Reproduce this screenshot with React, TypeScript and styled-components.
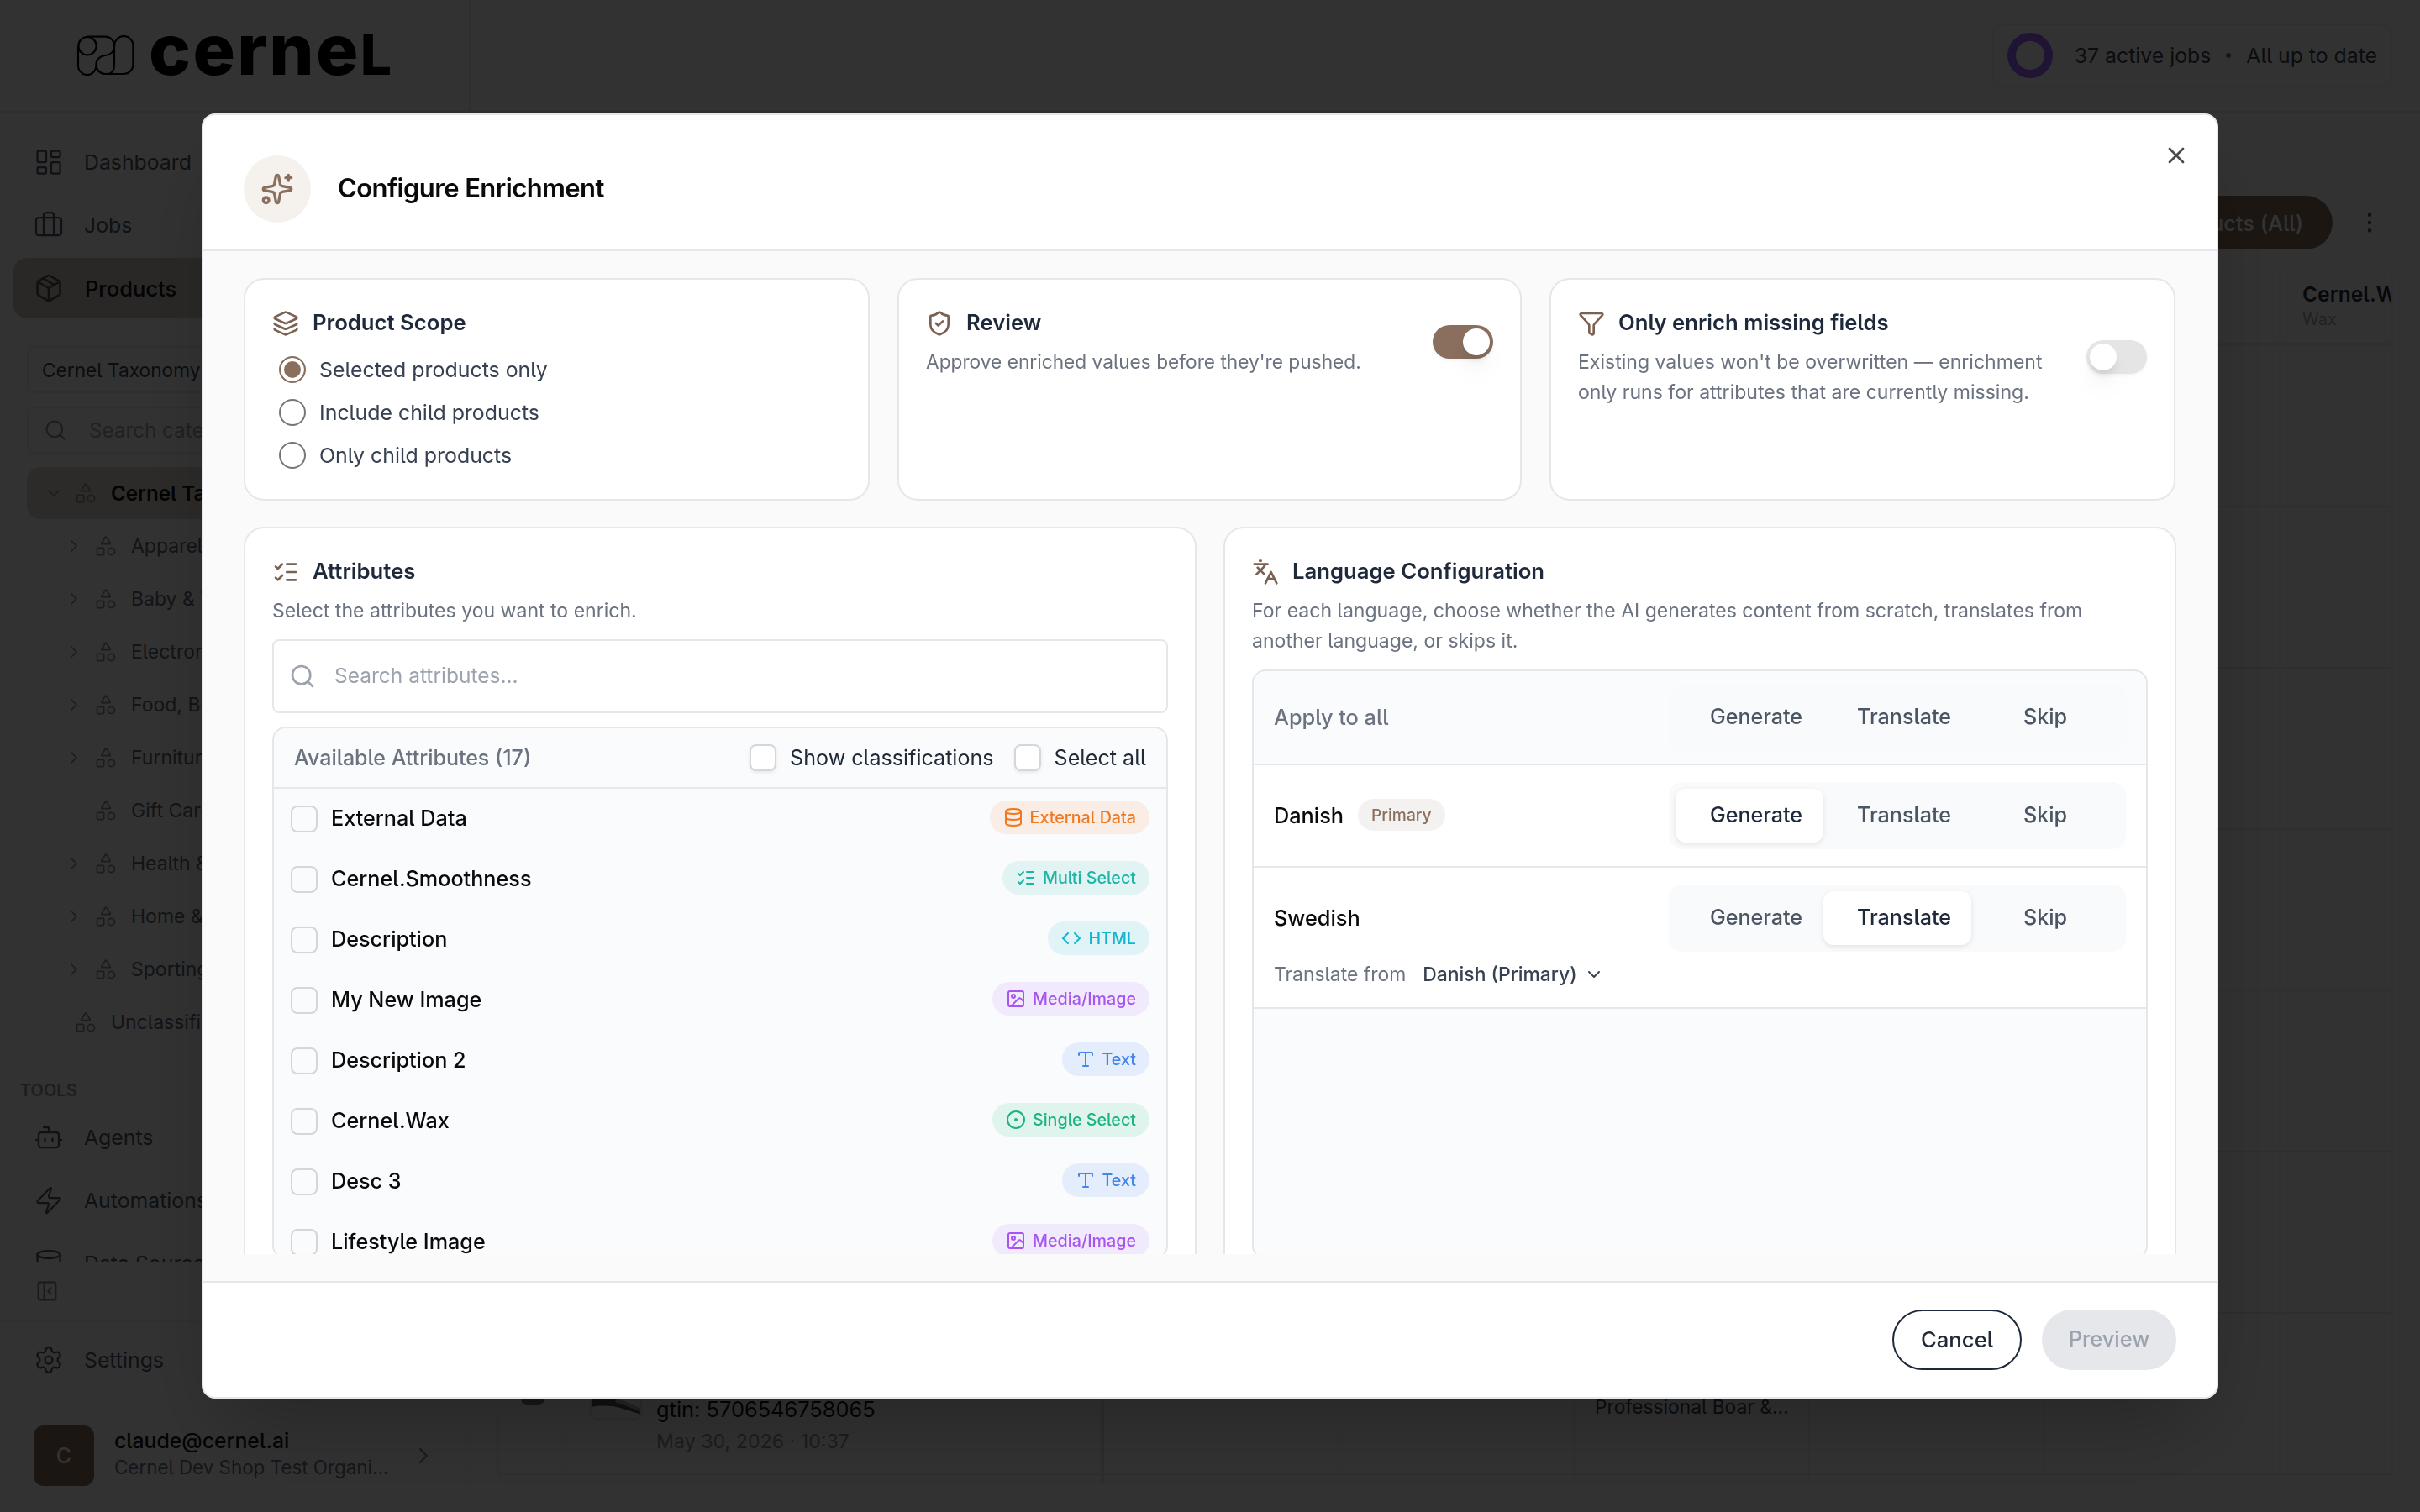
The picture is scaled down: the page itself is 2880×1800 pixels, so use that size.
import styled, { createGlobalStyle, css } from 'styled-components';
import {
  Bot,
  Briefcase,
  Check,
  ChevronDown,
  ChevronRight,
  CircleDot,
  Code,
  Database,
  EllipsisVertical,
  Funnel,
  Image,
  Languages,
  Layers,
  LayoutDashboard,
  ListChecks,
  Package,
  PanelLeftClose,
  Search,
  Settings,
  Shapes,
  ShieldCheck,
  Sparkles,
  Type,
  X,
  Zap,
} from 'lucide-react';
import type { LucideIcon } from 'lucide-react';
import { useState } from 'react';

type NavEntry = { label: string; icon: LucideIcon; active?: boolean };

type AttributeType =
  | 'External Data'
  | 'Multi Select'
  | 'HTML'
  | 'Media/Image'
  | 'Text'
  | 'Single Select';

type Mode = 'Generate' | 'Translate' | 'Skip';

const mainNav: NavEntry[] = [
  { label: 'Dashboard', icon: LayoutDashboard },
  { label: 'Jobs', icon: Briefcase },
  { label: 'Products', icon: Package, active: true },
];

const toolsNav: NavEntry[] = [
  { label: 'Agents', icon: Bot },
  { label: 'Automations', icon: Zap },
  { label: 'Data Sources', icon: Database },
];

const categories = [
  { label: 'Apparel', expandable: true },
  { label: 'Baby & Toddler', expandable: true },
  { label: 'Electronics', expandable: true },
  { label: 'Food, Beverages', expandable: true },
  { label: 'Furniture', expandable: true },
  { label: 'Gift Cards', expandable: false },
  { label: 'Health & Beauty', expandable: true },
  { label: 'Home & Garden', expandable: true },
  { label: 'Sporting Goods', expandable: true },
];

const typeStyles: Record<AttributeType, { icon: LucideIcon; color: string; bg: string }> = {
  'External Data': { icon: Database, color: '#f07820', bg: '#f9ede5' },
  'Multi Select': { icon: ListChecks, color: '#1db5a5', bg: '#e1f4f3' },
  HTML: { icon: Code, color: '#12b5cf', bg: '#e0f4f8' },
  'Media/Image': { icon: Image, color: '#a855f0', bg: '#f0eafc' },
  Text: { icon: Type, color: '#4585ee', bg: '#e4edfc' },
  'Single Select': { icon: CircleDot, color: '#1bb47f', bg: '#e0f4ee' },
};

const attributes: { name: string; type: AttributeType }[] = [
  { name: 'External Data', type: 'External Data' },
  { name: 'Cernel.Smoothness', type: 'Multi Select' },
  { name: 'Description', type: 'HTML' },
  { name: 'My New Image', type: 'Media/Image' },
  { name: 'Description 2', type: 'Text' },
  { name: 'Cernel.Wax', type: 'Single Select' },
  { name: 'Desc 3', type: 'Text' },
  { name: 'Lifestyle Image', type: 'Media/Image' },
];

const scopes = ['Selected products only', 'Include child products', 'Only child products'];
const modes: Mode[] = ['Generate', 'Translate', 'Skip'];
const tableRows = [0, 1, 2, 3, 4, 5, 6, 7];
const tableColumns = [0, 1, 2, 3, 4, 5, 6, 7];

const LogoMark = () => (
  <svg width="69" height="48" viewBox="34 36 207 144" fill="none" stroke="#000" strokeWidth="6.5">
    <circle cx="73" cy="74" r="32" />
    <path d="M40 74v68a32 32 0 0 0 64 6" />
    <path d="M73 41h63a32 32 0 0 1 33 33c0 20-14 32-33 34c-19 2-32 16-32 34a33 33 0 0 0 33 32h66a33 33 0 0 0 33-33V74a33 33 0 0 0-66-4" />
    <path d="M169 74v70c0 15-8 26-20 30" />
  </svg>
);

const Thumbnail = () => (
  <svg width="60" height="60" viewBox="0 0 60 60">
    <path d="M0 34c14-2 26 0 36 5l24 10v5l-26-8c-12-3-24-3-34-1z" fill="#555" />
    <path d="M30 34l30 13v4L28 39z" fill="#b9b6b2" />
  </svg>
);

const NavItem = ({ label, icon: Icon, active }: NavEntry) => (
  <S.NavItem $active={active}>
    <Icon size={36} strokeWidth={active ? 1.7 : 1.5} />
    <span>{label}</span>
  </S.NavItem>
);

const Sidebar = () => (
  <S.Sidebar>
    <S.SidebarScroll>
      {mainNav.map((item) => (
        <NavItem key={item.label} {...item} />
      ))}
      <S.TaxonomySelect>Cernel Taxonomy</S.TaxonomySelect>
      <S.CategorySearch>
        <Search size={28} strokeWidth={1.7} />
        Search categories...
      </S.CategorySearch>
      <S.Tree>
        <S.TreeRow $root>
          <S.TreeChevron>
            <ChevronDown size={24} strokeWidth={1.7} />
          </S.TreeChevron>
          <Shapes size={28} strokeWidth={1.5} />
          <span>Cernel Taxonomy</span>
        </S.TreeRow>
        {categories.map(({ label, expandable }) => (
          <S.TreeRow key={label} $depth={1}>
            <S.TreeChevron>
              {expandable && <ChevronRight size={24} strokeWidth={1.7} />}
            </S.TreeChevron>
            <Shapes size={28} strokeWidth={1.5} />
            <span>{label}</span>
          </S.TreeRow>
        ))}
        <S.TreeRow>
          <S.TreeChevron />
          <Shapes size={28} strokeWidth={1.5} />
          <span>Unclassified</span>
        </S.TreeRow>
      </S.Tree>
      <S.NavLabel>TOOLS</S.NavLabel>
      {toolsNav.map((item) => (
        <NavItem key={item.label} {...item} />
      ))}
    </S.SidebarScroll>
    <S.CollapseRow>
      <PanelLeftClose size={28} strokeWidth={1.6} />
    </S.CollapseRow>
    <S.SettingsRow>
      <NavItem label="Settings" icon={Settings} />
    </S.SettingsRow>
    <S.Account>
      <S.Avatar>C</S.Avatar>
      <S.AccountText>
        <strong>claude@cernel.ai</strong>
        <span>Cernel Dev Shop Test Organi...</span>
      </S.AccountText>
      <ChevronRight size={32} strokeWidth={1.5} />
    </S.Account>
  </S.Sidebar>
);

const TableCell = ({ row, column }: { row: number; column: number }) => {
  if (row !== 6) return <S.Cell $thick={column === 1} />;
  if (column === 0) {
    return (
      <S.Cell>
        <S.RowCheck>
          <Check size={20} strokeWidth={3} />
        </S.RowCheck>
      </S.Cell>
    );
  }
  if (column === 1) {
    return (
      <S.Cell $thick>
        <S.ProductCell>
          <S.Thumb>
            <Thumbnail />
          </S.Thumb>
          <S.ProductText>
            <span>gtin: 5706546758065</span>
            <small>May 30, 2026 · 10:37</small>
          </S.ProductText>
        </S.ProductCell>
      </S.Cell>
    );
  }
  return (
    <S.Cell>{column === 4 && <S.CellText>Professional Boar &amp;...</S.CellText>}</S.Cell>
  );
};

const ProductsPage = () => (
  <S.Content>
    <S.PageActions>
      <S.EnrichButton>Enrich Products (All)</S.EnrichButton>
      <EllipsisVertical size={32} strokeWidth={1.5} />
    </S.PageActions>
    <S.Table>
      <S.TableHead>
        {tableColumns.map((column) => (
          <S.Cell key={column} $thick={column === 1}>
            {column === 7 && (
              <S.HeadText>
                <strong>Cernel.Wax</strong>
                <span>Wax</span>
              </S.HeadText>
            )}
          </S.Cell>
        ))}
      </S.TableHead>
      {tableRows.map((row) => (
        <S.TableRow key={row}>
          {tableColumns.map((column) => (
            <TableCell key={column} row={row} column={column} />
          ))}
        </S.TableRow>
      ))}
    </S.Table>
  </S.Content>
);

const ModeSwitch = ({ value, onChange }: { value?: Mode; onChange: (mode: Mode) => void }) => (
  <S.Segments>
    {modes.map((mode) => (
      <S.Segment
        key={mode}
        $active={mode === value}
        $indent={mode !== 'Skip'}
        onClick={() => onChange(mode)}
      >
        {mode}
      </S.Segment>
    ))}
  </S.Segments>
);

const EnrichmentModal = () => {
  const [scope, setScope] = useState(scopes[0]);
  const [review, setReview] = useState(true);
  const [onlyMissing, setOnlyMissing] = useState(false);
  const [danish, setDanish] = useState<Mode>('Generate');
  const [swedish, setSwedish] = useState<Mode>('Translate');

  const applyToAll = (mode: Mode) => {
    setDanish(mode);
    setSwedish(mode);
  };

  return (
    <S.Modal>
      <S.CloseButton>
        <X size={32} />
      </S.CloseButton>
      <S.ModalHeader>
        <S.HeaderIcon>
          <Sparkles size={40} />
        </S.HeaderIcon>
        <h2>Configure Enrichment</h2>
      </S.ModalHeader>
      <S.ModalBody>
        <S.ModalScroll>
          <S.TopGrid>
            <S.Card>
              <S.CardTitle>
                <Layers size={32} />
                Product Scope
              </S.CardTitle>
              <S.RadioList>
                {scopes.map((item) => (
                  <S.RadioRow key={item} onClick={() => setScope(item)}>
                    <S.Radio $checked={item === scope} />
                    {item}
                  </S.RadioRow>
                ))}
              </S.RadioList>
            </S.Card>
            <S.Card>
              <S.ToggleRow>
                <S.ToggleText>
                  <S.CardTitle>
                    <ShieldCheck size={32} />
                    Review
                  </S.CardTitle>
                  <S.CardDesc $tight>Approve enriched values before they're pushed.</S.CardDesc>
                </S.ToggleText>
                <S.Toggle $on={review} onClick={() => setReview(!review)} />
              </S.ToggleRow>
            </S.Card>
            <S.Card>
              <S.ToggleRow>
                <S.ToggleText>
                  <S.CardTitle>
                    <Funnel size={32} />
                    Only enrich missing fields
                  </S.CardTitle>
                  <S.CardDesc>
                    Existing values won't be overwritten — enrichment only runs for attributes that
                    are currently missing.
                  </S.CardDesc>
                </S.ToggleText>
                <S.Toggle $on={onlyMissing} onClick={() => setOnlyMissing(!onlyMissing)} />
              </S.ToggleRow>
            </S.Card>
          </S.TopGrid>

          <S.BottomGrid>
            <S.Card>
              <S.CardTitle>
                <ListChecks size={32} />
                Attributes
              </S.CardTitle>
              <S.CardDesc>Select the attributes you want to enrich.</S.CardDesc>
              <S.SearchBox>
                <Search size={32} />
                Search attributes...
              </S.SearchBox>
              <S.Panel>
                <S.ListHeader>
                  <S.ListCount>Available Attributes (17)</S.ListCount>
                  <S.CheckOption>
                    <S.Checkbox $raised />
                    Show classifications
                  </S.CheckOption>
                  <S.CheckOption>
                    <S.Checkbox $raised />
                    Select all
                  </S.CheckOption>
                </S.ListHeader>
                {attributes.map(({ name, type }) => {
                  const { icon: Icon, color, bg } = typeStyles[type];
                  return (
                    <S.AttributeRow key={name}>
                      <S.Checkbox />
                      <S.AttributeName>{name}</S.AttributeName>
                      <S.TypeBadge $color={color} $bg={bg}>
                        <Icon size={24} />
                        {type}
                      </S.TypeBadge>
                    </S.AttributeRow>
                  );
                })}
              </S.Panel>
            </S.Card>

            <S.Card>
              <S.CardTitle>
                <Languages size={32} />
                Language Configuration
              </S.CardTitle>
              <S.CardDesc>
                For each language, choose whether the AI generates content from scratch, translates
                from another language, or skips it.
              </S.CardDesc>
              <S.Panel $tall>
                <S.LanguageRow $header>
                  <S.LanguageMain>
                    <S.LanguageName $muted>Apply to all</S.LanguageName>
                    <ModeSwitch onChange={applyToAll} />
                  </S.LanguageMain>
                </S.LanguageRow>
                <S.LanguageRow>
                  <S.LanguageMain>
                    <S.LanguageName>
                      Danish
                      <S.PrimaryBadge>Primary</S.PrimaryBadge>
                    </S.LanguageName>
                    <ModeSwitch value={danish} onChange={setDanish} />
                  </S.LanguageMain>
                </S.LanguageRow>
                <S.LanguageRow>
                  <S.LanguageMain>
                    <S.LanguageName>Swedish</S.LanguageName>
                    <ModeSwitch value={swedish} onChange={setSwedish} />
                  </S.LanguageMain>
                  <S.TranslateFrom>
                    Translate from
                    <strong>Danish (Primary)</strong>
                    <ChevronDown size={24} />
                  </S.TranslateFrom>
                </S.LanguageRow>
              </S.Panel>
            </S.Card>
          </S.BottomGrid>
        </S.ModalScroll>
      </S.ModalBody>
      <S.ModalFooter>
        <S.CancelButton>Cancel</S.CancelButton>
        <S.PreviewButton disabled>Preview</S.PreviewButton>
      </S.ModalFooter>
    </S.Modal>
  );
};

const App = () => (
  <>
    <GlobalStyle />
    <S.Page>
      <S.TopBar>
        <S.Brand>
          <LogoMark />
          <S.Wordmark>
            cerne<span>l</span>
          </S.Wordmark>
        </S.Brand>
        <S.JobsPill>
          <S.Ring />
          <span>37 active jobs</span>
          <S.Dot />
          <span>All up to date</span>
        </S.JobsPill>
      </S.TopBar>
      <S.Main>
        <Sidebar />
        <ProductsPage />
      </S.Main>
    </S.Page>
    <S.Overlay>
      <EnrichmentModal />
    </S.Overlay>
  </>
);

const GlobalStyle = createGlobalStyle`
  *, *::before, *::after {
    box-sizing: border-box;
  }

  body {
    margin: 0;
    overflow: hidden;
    font-family: Inter, 'Liberation Sans', sans-serif;
    font-size: 25px;
    font-weight: 430;
    font-feature-settings: 'cv05';
    color: #1f2937;
  }

  h2, p {
    margin: 0;
  }

  button {
    font: inherit;
    font-feature-settings: inherit;
    color: inherit;
    background: none;
    border: none;
    padding: 0;
  }

  svg {
    flex-shrink: 0;
  }
`;

const S = {
  Page: styled.div`
    width: 2880px;
    height: 1800px;
    display: flex;
    flex-direction: column;
    background: #fafafa;
  `,
  TopBar: styled.header`
    height: 134px;
    display: flex;
    align-items: center;
    justify-content: space-between;
    border-bottom: 2px solid #ebebeb;
    padding-right: 33px;
  `,
  Brand: styled.div`
    width: 560px;
    height: 100%;
    display: flex;
    align-items: center;
    gap: 17px;
    padding-left: 91px;
    border-right: 2px solid #ebebeb;
  `,
  Wordmark: styled.div`
    font-size: 84px;
    font-weight: 800;
    line-height: 69px;
    height: 84px;
    letter-spacing: 2.4px;
    color: #000;

    span {
      font-size: 66px;
      text-transform: uppercase;
    }
  `,
  JobsPill: styled.div`
    width: 476px;
    height: 76px;
    display: flex;
    align-items: center;
    padding: 0 16px;
    border: 2px solid #ececec;
    border-radius: 16px;
    font-size: 24.8px;
    color: #374151;
    white-space: nowrap;
  `,
  Ring: styled.div`
    width: 54px;
    height: 54px;
    margin-right: 26px;
    border: 10px solid #9a66ff;
    border-radius: 50%;
  `,
  Dot: styled.div`
    width: 6px;
    height: 6px;
    margin: 0 18px;
    border-radius: 50%;
    background: #6b7280;
  `,
  Main: styled.div`
    flex: 1;
    min-height: 0;
    display: flex;
  `,

  Sidebar: styled.aside`
    width: 560px;
    flex-shrink: 0;
    display: flex;
    flex-direction: column;
    border-right: 2px solid #f3f3f3;
  `,
  SidebarScroll: styled.div`
    height: 1368px;
    overflow: hidden;
    padding: 23px 16px 0;
  `,
  NavItem: styled.div<{ $active?: boolean }>`
    height: 72px;
    margin-bottom: 3px;
    padding: 0 24px;
    display: flex;
    align-items: center;
    gap: 24px;
    border-radius: 16px;
    font-size: 24.8px;
    color: #4b5563;

    ${({ $active }) =>
      $active &&
      css`
        gap: 25px;
        background: #d0c8bf;
        color: #111;
        font-size: 25.5px;
        font-weight: 520;

        svg {
          color: #5a4a3f;
        }
      `}
  `,
  TaxonomySelect: styled.div`
    height: 56px;
    margin: 33px 16px 16px;
    padding: 0 16px;
    display: flex;
    align-items: center;
    border: 2px solid #e9e9e9;
    border-radius: 8px;
    font-size: 22.7px;
    color: #374151;
  `,
  CategorySearch: styled.div`
    height: 56px;
    margin: 0 16px 16px;
    padding: 0 18px;
    display: flex;
    align-items: center;
    gap: 26px;
    border: 2px solid #e9e9e9;
    border-radius: 8px;
    font-size: 24.2px;
    color: #a3a3a3;

    svg {
      color: #858b94;
    }
  `,
  Tree: styled.div`
    display: flex;
    flex-direction: column;
    gap: 1px;
    padding: 0 16px;
  `,
  TreeRow: styled.div<{ $root?: boolean; $depth?: number }>`
    height: 62px;
    padding-left: ${({ $depth }) => ($depth ? 44 : 20)}px;
    display: flex;
    align-items: center;
    border-radius: 16px;
    font-size: ${({ $root }) => ($root ? 24.2 : 23)}px;
    font-weight: ${({ $root }) => ($root ? 600 : 430)};
    color: ${({ $root }) => ($root ? '#111' : '#5d646e')};
    background: ${({ $root }) => ($root ? '#dcd6cf' : 'none')};

    svg {
      color: #8a8a8a;
    }

    span {
      margin-left: 16px;
    }
  `,
  TreeChevron: styled.div`
    width: 36px;
    height: 24px;
    display: flex;
  `,
  NavLabel: styled.div`
    height: 40px;
    margin-top: 30px;
    padding-left: 8px;
    line-height: 40px;
    font-size: 20px;
    font-weight: 560;
    color: #a3917f;
  `,
  CollapseRow: styled.div`
    height: 72px;
    display: flex;
    align-items: center;
    padding-left: 42px;
    border-bottom: 2px solid #f0f0f0;
    color: #7b8089;
  `,
  SettingsRow: styled.div`
    height: 86px;
    padding: 9px 16px 0;
    border-bottom: 2px solid #f3f3f3;
  `,
  Account: styled.div`
    height: 140px;
    display: flex;
    align-items: center;
    padding: 6px 38px 0 40px;
    color: #7b8089;
  `,
  Avatar: styled.div`
    width: 72px;
    height: 72px;
    display: flex;
    align-items: center;
    justify-content: center;
    border-radius: 12px;
    background: #8b6f5e;
    color: #fff;
    font-size: 25px;
    font-weight: 500;
  `,
  AccountText: styled.div`
    flex: 1;
    display: flex;
    flex-direction: column;
    padding: 0 0 4px 24px;
    line-height: 32px;

    strong {
      font-size: 24.8px;
      font-weight: 520;
      color: #111;
    }

    span {
      font-size: 22.4px;
      color: #6b7280;
    }
  `,

  Content: styled.main`
    flex: 1;
    min-width: 0;
    padding: 98px 32px 0 32px;
  `,
  PageActions: styled.div`
    height: 66px;
    display: flex;
    align-items: center;
    justify-content: flex-end;
    gap: 28px;
    padding-right: 12px;
    margin-bottom: 16px;
    color: #4b5563;
  `,
  EnrichButton: styled.button`
    height: 64px;
    padding: 0 35px 0 36px;
    border-radius: 32px;
    background: #8b6f5e;
    color: #fff;
    font-size: 25.4px;
    font-weight: 500;
  `,
  Table: styled.div`
    height: 1453px;
    overflow: hidden;
    border: 2px solid #efefef;
    border-radius: 16px;
  `,
  TableHead: styled.div`
    height: 96px;
    display: grid;
    grid-template-columns: 80px 640px repeat(5, 280px) 1fr;
    border-bottom: 4px solid #e9e9e9;
  `,
  TableRow: styled.div`
    height: 192px;
    display: grid;
    grid-template-columns: 80px 640px repeat(5, 280px) 1fr;
    border-bottom: 2px solid #e4e4e4;
    background: #f7f8f8;
  `,
  Cell: styled.div<{ $thick?: boolean }>`
    min-width: 0;
    display: flex;
    align-items: center;
    overflow: hidden;
    border-right: ${({ $thick }) => ($thick ? '4px solid #dedede' : '2px solid #eee')};

    &:last-child {
      border-right: none;
    }
  `,
  HeadText: styled.div`
    display: flex;
    flex-direction: column;
    gap: 2px;
    padding: 5px 0 0 26px;
    white-space: nowrap;
    line-height: 28px;

    strong {
      font-size: 24.6px;
      font-weight: 600;
    }

    span {
      font-size: 20px;
      color: #a8a8a8;
    }
  `,
  RowCheck: styled.div`
    width: 28px;
    height: 28px;
    margin-left: 26px;
    display: flex;
    align-items: center;
    justify-content: center;
    border-radius: 8px;
    background: #6f6f6f;
    color: #fff;
  `,
  ProductCell: styled.div`
    height: 152px;
    display: flex;
    align-items: center;
    padding-left: 28px;
  `,
  Thumb: styled.div`
    width: 62px;
    height: 62px;
    border: 2px solid #e2e2e2;
    border-radius: 8px;
    overflow: hidden;
  `,
  ProductText: styled.div`
    height: 152px;
    display: flex;
    flex-direction: column;
    justify-content: flex-end;
    padding-left: 17px;
    line-height: 38px;
    font-size: 25.4px;
    color: #111;

    small {
      font-size: 23.2px;
      color: #8b9099;
    }
  `,
  CellText: styled.div`
    padding: 32px 0 0 24px;
    font-size: 22.8px;
    line-height: 32px;
    color: #374151;
  `,

  Overlay: styled.div`
    position: fixed;
    inset: 0;
    display: flex;
    align-items: center;
    justify-content: center;
    background: rgba(0, 0, 0, 0.8);
  `,
  Modal: styled.div`
    position: relative;
    width: 2400px;
    height: 1530px;
    display: flex;
    flex-direction: column;
    border: 2px solid #e5e7eb;
    border-radius: 16px;
    background: #fff;
    overflow: hidden;
    box-shadow: 0 50px 100px -24px rgba(0, 0, 0, 0.25);
  `,
  CloseButton: styled.button`
    position: absolute;
    top: 32px;
    right: 32px;
    display: flex;
    color: #4a4a4a;
  `,
  ModalHeader: styled.div`
    height: 162px;
    display: flex;
    align-items: center;
    gap: 32px;
    padding: 16px 48px 0;
    border-bottom: 2px solid #e5e7eb;

    h2 {
      padding-bottom: 3px;
      font-size: 31px;
      font-weight: 620;
      letter-spacing: -0.6px;
      color: #0a0a0a;
    }
  `,
  HeaderIcon: styled.div`
    width: 80px;
    height: 80px;
    display: flex;
    align-items: center;
    justify-content: center;
    border-radius: 50%;
    background: #f5f2ee;
    color: #8b6f5e;
  `,
  ModalBody: styled.div`
    flex: 1;
    min-height: 0;
    display: flex;
    padding: 32px 48px;
    background: #fafafa;
  `,
  ModalScroll: styled.div`
    flex: 1;
    overflow: hidden;
  `,
  TopGrid: styled.div`
    height: 264px;
    display: grid;
    grid-template-columns: 745px 743px 745px;
    gap: 33px;
    margin-bottom: 32px;
  `,
  BottomGrid: styled.div`
    height: 920px;
    display: grid;
    grid-template-columns: repeat(2, 1fr);
    gap: 32px;
  `,
  Card: styled.section`
    padding: 32px;
    border: 2px solid #e5e7e8;
    border-radius: 24px;
    background: #fff;
  `,
  CardTitle: styled.div`
    height: 40px;
    display: flex;
    align-items: center;
    gap: 16px;
    padding-bottom: 3px;
    font-size: 25.7px;
    font-weight: 610;
    color: #1e293b;

    svg {
      margin-top: 3px;
      color: #7a6152;
    }
  `,
  CardDesc: styled.p<{ $tight?: boolean }>`
    margin-top: 8px;
    font-size: ${({ $tight }) => ($tight ? 22.7 : 23.05)}px;
    line-height: 36px;
    color: #6b7280;
  `,
  RadioList: styled.div`
    display: flex;
    flex-direction: column;
    gap: 11px;
    margin-top: 15px;
    padding-left: 8px;
  `,
  RadioRow: styled.label`
    height: 40px;
    display: flex;
    align-items: center;
    gap: 16px;
    font-size: 24.9px;
    color: #374151;
  `,
  Radio: styled.span<{ $checked: boolean }>`
    width: 32px;
    height: 32px;
    border: 2px solid ${({ $checked }) => ($checked ? '#8b6f5e' : '#767676')};
    border-radius: 50%;
    background: ${({ $checked }) => ($checked ? '#8b6f5e' : '#fff')};
    box-shadow: ${({ $checked }) => ($checked ? 'inset 0 0 0 4px #fff' : 'none')};
  `,
  ToggleRow: styled.div`
    display: flex;
    align-items: center;
    gap: 32px;
  `,
  ToggleText: styled.div`
    flex: 1;
  `,
  Toggle: styled.button<{ $on: boolean }>`
    width: 72px;
    height: 40px;
    padding: 0 4px;
    display: flex;
    align-items: center;
    justify-content: ${({ $on }) => ($on ? 'flex-end' : 'flex-start')};
    border-radius: 20px;
    background: ${({ $on }) => ($on ? '#8b6f5e' : '#e5e5e5')};
    box-shadow: 0 2px 4px rgba(0, 0, 0, 0.05);

    &::after {
      content: '';
      width: 32px;
      height: 32px;
      border-radius: 50%;
      background: #fff;
      box-shadow:
        0 20px 30px -6px rgba(0, 0, 0, 0.1),
        0 8px 12px -4px rgba(0, 0, 0, 0.1);
    }
  `,
  SearchBox: styled.div`
    height: 88px;
    margin: 16px 0;
    padding: 0 18px 2px;
    display: flex;
    align-items: center;
    gap: 22px;
    border: 2px solid #e5e7e8;
    border-radius: 8px;
    font-size: 24.5px;
    color: #9ca3af;

    svg {
      margin-top: 2px;
    }
  `,
  Panel: styled.div<{ $tall?: boolean }>`
    height: ${({ $tall }) => ($tall ? 702 : 634)}px;
    margin-top: 16px;
    border: 2px solid #e5e7e8;
    border-radius: 16px;
    background: #fafbfd;
    overflow: hidden;
  `,
  ListHeader: styled.div`
    height: 72px;
    display: flex;
    align-items: center;
    gap: 24px;
    padding: 0 24px;
    border-bottom: 2px solid #e5e7e8;
  `,
  ListCount: styled.div`
    flex: 1;
    font-weight: 550;
    color: #6b7280;
  `,
  CheckOption: styled.label`
    display: flex;
    align-items: center;
    gap: 16px;
    font-size: 25.1px;
  `,
  Checkbox: styled.span<{ $raised?: boolean }>`
    width: 32px;
    height: 32px;
    border: 2px solid #d4d6d9;
    border-radius: 8px;
    background: ${({ $raised }) => ($raised ? '#fff' : 'transparent')};
    box-shadow: ${({ $raised }) => ($raised ? '0 2px 4px rgba(0, 0, 0, 0.08)' : 'none')};
  `,
  AttributeRow: styled.div`
    height: 72px;
    display: flex;
    align-items: center;
    gap: 16px;
    padding: 0 20px;
    font-size: 25.2px;
    font-weight: 550;
  `,
  AttributeName: styled.span`
    padding-bottom: 2px;
    color: #0a0a0a;
  `,
  TypeBadge: styled.div<{ $color: string; $bg: string }>`
    height: 40px;
    margin: 0 0 4px auto;
    padding: 0 16px;
    display: flex;
    align-items: center;
    gap: 8px;
    border-radius: 20px;
    font-size: 19.7px;
    color: ${({ $color }) => $color};
    background: ${({ $bg }) => $bg};
  `,
  LanguageRow: styled.div<{ $header?: boolean }>`
    padding: ${({ $header }) => ($header ? '15px' : '20px')} 24px;
    border-bottom: 2px solid #e5e7e8;
    background: ${({ $header }) => ($header ? 'transparent' : '#fff')};
  `,
  LanguageMain: styled.div`
    display: flex;
    align-items: center;
    justify-content: space-between;
  `,
  LanguageName: styled.div<{ $muted?: boolean }>`
    display: flex;
    align-items: center;
    gap: 17px;
    padding-bottom: 2px;
    font-size: 25.3px;
    font-weight: ${({ $muted }) => ($muted ? 500 : 550)};
    color: ${({ $muted }) => ($muted ? '#6b7280' : '#0a0a0a')};
  `,
  PrimaryBadge: styled.span`
    height: 38px;
    padding: 0 16px;
    display: flex;
    align-items: center;
    border-radius: 19px;
    font-size: 19.2px;
    color: #8b6f5e;
    background: #f4f2f0;
  `,
  Segments: styled.div`
    width: 544px;
    height: 80px;
    display: grid;
    grid-template-columns: repeat(3, 1fr);
    padding: 8px;
    border-radius: 16px;
    background: #f9fafb;
  `,
  Segment: styled.button<{ $active: boolean; $indent: boolean }>`
    padding: 0 0 2px ${({ $indent }) => ($indent ? 16 : 0)}px;
    border-radius: 12px;
    font-size: 25.1px;
    font-weight: 530;
    color: ${({ $active }) => ($active ? '#1e293b' : '#4b5563')};
    background: ${({ $active }) => ($active ? '#fff' : 'none')};
    box-shadow: ${({ $active }) => ($active ? '0 2px 6px rgba(0, 0, 0, 0.1)' : 'none')};
  `,
  TranslateFrom: styled.div`
    height: 38px;
    margin-top: 8px;
    display: flex;
    align-items: center;
    font-size: 22.9px;
    color: #6b7280;

    strong {
      margin: 0 8px 0 20px;
      font-weight: 520;
      color: #374151;
    }

    svg {
      color: #374151;
    }
  `,
  ModalFooter: styled.div`
    height: 138px;
    display: flex;
    align-items: center;
    justify-content: flex-end;
    gap: 24px;
    padding: 0 48px;
    border-top: 2px solid #e5e7eb;
  `,
  CancelButton: styled.button`
    width: 154px;
    height: 72px;
    padding-bottom: 2px;
    border: 2px solid #1e293b;
    border-radius: 36px;
    font-size: 25.7px;
    font-weight: 540;
  `,
  PreviewButton: styled.button`
    width: 160px;
    height: 72px;
    padding-bottom: 3px;
    border-radius: 36px;
    font-size: 25.4px;
    font-weight: 530;
    color: #9ca3af;
    background: #e5e7eb;
  `,
};

export default App;
